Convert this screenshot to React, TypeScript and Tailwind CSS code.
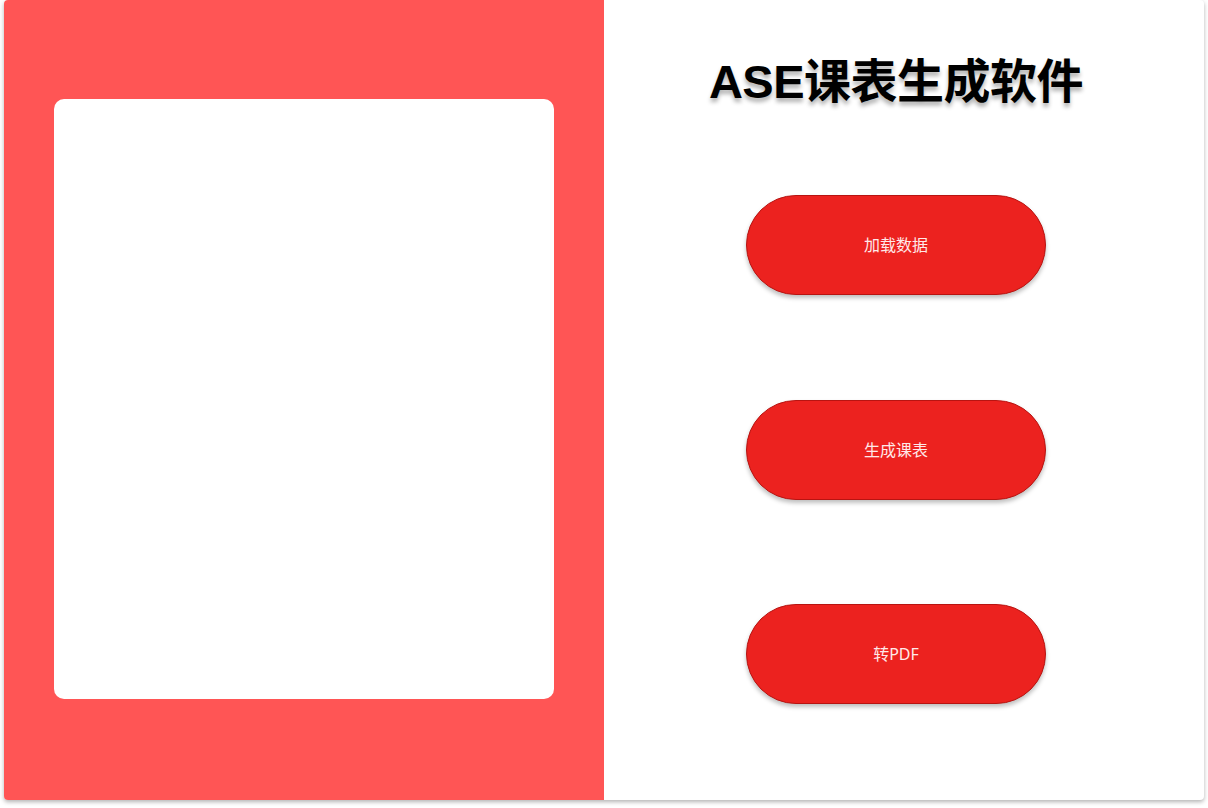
const buttons = ["加载数据", "生成课表", "转PDF"];

export default function App() {
  return (
    <div className="w-[1208px] h-[808px] bg-white">
      <div
        className="ml-[4px] w-[1200px] h-[800px] flex rounded-[4px] bg-white shadow-[0_2px_4px_rgba(0,0,0,0.3)]"
        style={{ fontFamily: '"Noto Sans", "Noto Sans CJK SC", sans-serif' }}
      >
        {/* 左侧预览区 */}
        <div className="w-[600px] h-full bg-[#ff5555] rounded-l-[4px] pl-[50px] pt-[99px]">
          <div className="w-[500px] h-[600px] bg-white rounded-[10px]" />
        </div>

        {/* 右侧操作区 */}
        <div className="flex-1 flex flex-col items-center pr-[16px] pt-[55px]">
          <h1
            className="text-[47px] leading-[54px] font-bold text-black tracking-[-0.5px] [text-shadow:0_4px_4px_rgba(0,0,0,0.3)]"
            style={{ fontFamily: '"Liberation Sans", "Noto Sans CJK SC", sans-serif' }}
          >
            ASE课表生成软件
          </h1>
          <div className="mt-[86px] flex flex-col gap-[104.5px]">
            {buttons.map((label) => (
              <button
                key={label}
                type="button"
                className="w-[300px] h-[100px] rounded-full bg-[#ec221f] border border-[#b81411] text-[#ffe9e9] text-[16px] shadow-[0_3px_4px_rgba(0,0,0,0.25)]"
              >
                {label}
              </button>
            ))}
          </div>
        </div>
      </div>
    </div>
  );
}
